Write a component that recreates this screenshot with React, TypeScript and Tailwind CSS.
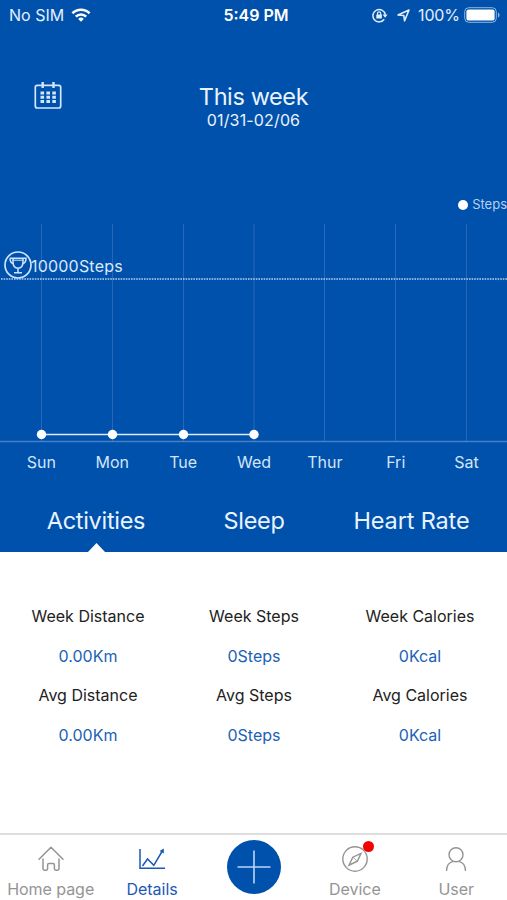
import React from 'react';

const days = ['Sun', 'Mon', 'Tue', 'Wed', 'Thur', 'Fri', 'Sat'];
const dayX = [41.5, 112.5, 183.5, 254, 324.5, 395.5, 466.5];

const stats = [
  { label: 'Week Distance', value: '0.00Km' },
  { label: 'Week Steps', value: '0Steps' },
  { label: 'Week Calories', value: '0Kcal' },
  { label: 'Avg Distance', value: '0.00Km' },
  { label: 'Avg Steps', value: '0Steps' },
  { label: 'Avg Calories', value: '0Kcal' },
];

const StatusBar = () => (
  <div className="grid h-[30px] grid-cols-3 items-center pl-[9px] pr-[8px] text-[#e3efff]">
    <div className="flex items-center gap-[7px]">
      <span className="text-[16px]">No SIM</span>
      <svg width="20" height="15" viewBox="0 0 20 15" fill="none" stroke="#fff" strokeWidth="2.6">
        <path d="M1.4 5.2a12.3 12.3 0 0 1 17.2 0" />
        <path d="M4.8 8.7a7.4 7.4 0 0 1 10.4 0" />
        <path d="M10 13.8l-2.8-2.9a4 4 0 0 1 5.6 0z" fill="#fff" stroke="none" />
      </svg>
    </div>
    <span className="pl-[4px] text-center text-[16px] font-semibold text-white">5:49 PM</span>
    <div className="flex items-center justify-end">
      <svg className="mr-[9px]" width="16" height="15" viewBox="0 0 16 15" fill="none" stroke="currentColor" strokeWidth="1.5">
        <path d="M12.2 11.2A6.2 6.2 0 1 1 13.2 6.6" />
        <path d="M10.6 6.6h5l-2.5 3.2z" fill="currentColor" stroke="none" />
        <rect x="4.3" y="6.4" width="5.6" height="4.2" rx=".5" fill="currentColor" stroke="none" />
        <path d="M5.5 7V5.4a1.6 1.6 0 0 1 3.2 0V7" strokeWidth="1.2" />
      </svg>
      <svg className="mr-2" width="13" height="13" viewBox="0 0 13 13" fill="none" stroke="currentColor" strokeWidth="1.6" strokeLinejoin="round">
        <path d="M12 1L7.6 11.8l-.8-5.3L1 6z" />
      </svg>
      <span className="text-[16px] tracking-[-0.1px]">100%</span>
      <svg className="-mr-[1px] ml-[4px]" width="36" height="16" viewBox="0 0 36 16" fill="none">
        <rect x=".7" y=".7" width="31.6" height="14.6" rx="4" stroke="#8fb5e2" />
        <rect x="2.4" y="2.4" width="28.2" height="11.2" rx="2.2" fill="#fff" />
        <path d="M34 5.4q1.6.8 1.6 2.6T34 10.6z" fill="#8fb5e2" />
      </svg>
    </div>
  </div>
);

const Header = () => (
  <div className="grid h-[102px] grid-cols-3 pt-[51px]">
    <svg className="ml-[34px]" width="28" height="28" viewBox="0 0 28 28" fill="none" stroke="#d3e6ff">
      <rect x="1.3" y="4.4" width="25.4" height="22.6" rx="2" strokeWidth="1.7" />
      <path d="M8.7 1v6M19.5 1v6" strokeWidth="2.4" />
      <path d="M6.5 12h15.4M6.5 16.3h15.4M6.5 20.6h15.4" strokeWidth="3" strokeDasharray="3.6 2.3" />
    </svg>
    <div className="flex flex-col items-center whitespace-nowrap text-[#e9f3ff]">
      <h1 className="text-[23.5px] leading-[31px] tracking-[-0.4px]">This week</h1>
      <p className="text-[16px] leading-[17px] tracking-[0.15px]">01/31-02/06</p>
    </div>
  </div>
);

const Chart = () => (
  <div className="relative">
    <div className="flex h-[90px] items-end justify-end gap-[4px] pb-[8px] text-[#b5d0f1]">
      <span className="mb-[4px] h-[10px] w-[10px] rounded-full bg-white"></span>
      <span className="text-[13px] leading-[19px]">Steps</span>
    </div>
    <svg className="block" width="507" height="222" viewBox="0 222 507 222" fill="none">
      {dayX.map((x) => (
        <path key={x} d={`M${x} 224V441`} stroke="#2768ba" />
      ))}
      <path d="M0 441.5H507" stroke="#4380c8" strokeWidth="1.4" />
      <path d="M1 279H507" stroke="#b4cff1" strokeWidth="1.3" strokeDasharray="1.6 1" />
      <path d="M41 434.5H254" stroke="#dbeaff" strokeWidth="1.5" />
      {dayX.slice(0, 4).map((x) => (
        <circle key={x} cx={x} cy="434.5" r="4.7" fill="#fff" />
      ))}
    </svg>
    <div className="absolute left-[4px] top-[119px] flex items-center text-[#dbe9fc]">
      <svg width="28" height="28" viewBox="0 0 28 28" fill="none" stroke="#cfe3ff" strokeWidth="1.5">
        <circle cx="14" cy="14" r="13" strokeWidth="1.7" />
        <path d="M6 7.2h16c0 3.2-1.4 5-3.6 5.6M6 7.2c0 3.2 1.4 5 3.6 5.6" />
        <path d="M9 7.2v3.6c0 4.2 2.2 6.4 5 6.4s5-2.2 5-6.4V7.2M14 17.2v4.4M10 21.8h8" />
        <path d="M9 9.2h10" strokeWidth="1" />
      </svg>
      <span className="ml-[-1px] mt-[2px] text-[16px] tracking-[0.2px]">10000Steps</span>
    </div>
    <div className="ml-[6px] grid w-[496px] grid-cols-7 pt-[6px] text-center text-[16px] leading-[24px] text-[#d3e4fa]">
      {days.map((day) => (
        <span key={day}>{day}</span>
      ))}
    </div>
  </div>
);

const Tabs = () => (
  <div className="flex h-[78px] whitespace-nowrap text-[23.5px] leading-[30px] text-[#e9f3ff]">
    <button className="flex w-[192px] flex-col items-center justify-between pt-[32px] tracking-[-0.3px]">
      Activities
      <svg className="block" width="17" height="9" viewBox="0 0 17 9" fill="#fff">
        <path d="M0 9L8.5 0 17 9z" />
      </svg>
    </button>
    <button className="flex w-[124px] justify-center pt-[32px] tracking-[-0.3px]">Sleep</button>
    <button className="flex w-[191px] justify-center pt-[32px] tracking-[-0.15px]">Heart Rate</button>
  </div>
);

const Stats = () => (
  <div className="grid flex-1 grid-cols-[166px_166px_166px] content-start px-[5px] pt-[45px] text-center text-[16px] leading-[39.5px]">
    {stats.map((stat) => (
      <div key={stat.label} className="whitespace-nowrap">
        <p className="text-[#222]">{stat.label}</p>
        <p className="text-[#1b61b6]">{stat.value}</p>
      </div>
    ))}
  </div>
);

const BottomNav = () => (
  <nav className="grid h-[67px] grid-cols-5 border-t-2 border-[#dedede] text-center text-[16px] leading-[20px] text-[#949494]">
    <div className="flex flex-col items-center whitespace-nowrap pt-[11px]">
      <svg className="ml-px" width="28" height="28" viewBox="0 0 28 28" fill="none" stroke="currentColor" strokeWidth="1.5" strokeLinejoin="round" strokeLinecap="round">
        <path d="M2 13.3L14 1.2l12 12.1M6 13v9.8q0 1.4 1.4 1.4h1.8q1.4 0 1.4-1.4v-4q0-1.4 1.4-1.4h4q1.4 0 1.4 1.4v4q0 1.4 1.4 1.4h1.8q1.4 0 1.4-1.4V13" />
      </svg>
      <span className="mt-[5px] tracking-[-0.05px]">Home page</span>
    </div>
    <div className="flex flex-col items-center pt-[11px] text-[#1b59b3]">
      <svg width="28" height="28" viewBox="0 0 28 28" fill="none" stroke="currentColor" strokeWidth="1.5">
        <path d="M2 3v19.3h25M4.5 20l5-7 6.3 6.3L24 5.5" />
        <path d="M25.8 2.6v5l-4.2-2.5z" fill="currentColor" stroke="none" />
      </svg>
      <span className="mt-[5px]">Details</span>
    </div>
    <div className="flex justify-center pl-px pt-[5px]">
      <span className="flex h-[54px] w-[54px] items-center justify-center rounded-full bg-[#0051ab]">
        <svg width="34" height="34" viewBox="0 0 34 34" fill="none" stroke="#b8d5fa" strokeWidth="1.6">
          <path d="M17 .5v33M.5 17h33" />
        </svg>
      </span>
    </div>
    <div className="flex flex-col items-center pt-[11px]">
      <div className="relative">
        <svg width="28" height="28" viewBox="0 0 28 28" fill="none" stroke="currentColor" strokeWidth="1.4">
          <circle cx="14" cy="13" r="12.2" />
          <path d="M20 7.4l-3.6 7.8-8.4 4 3.8-8z" />
          <path d="M12 11.3l4.3 3.9" strokeWidth=".8" />
        </svg>
        <span className="absolute left-[22px] top-[-5px] h-[11px] w-[11px] rounded-full bg-[#f80000]"></span>
      </div>
      <span className="mt-[5px]">Device</span>
    </div>
    <div className="flex flex-col items-center pt-[11px]">
      <svg width="28" height="28" viewBox="0 0 28 28" fill="none" stroke="currentColor" strokeWidth="1.4">
        <circle cx="14" cy="8.7" r="7" />
        <path d="M4.5 25c0-5.2 2.8-8.8 7-9.6M23.5 25c0-5.2-2.8-8.8-7-9.6" />
      </svg>
      <span className="mt-[5px]">User</span>
    </div>
  </nav>
);

const App = () => {
  return (
    <div className="flex h-[900px] w-[507px] flex-col overflow-hidden bg-white font-['Inter',sans-serif]">
      <div className="h-[552px] bg-[#0051ab]">
        <StatusBar />
        <Header />
        <Chart />
        <Tabs />
      </div>
      <Stats />
      <BottomNav />
    </div>
  );
};

export default App;
